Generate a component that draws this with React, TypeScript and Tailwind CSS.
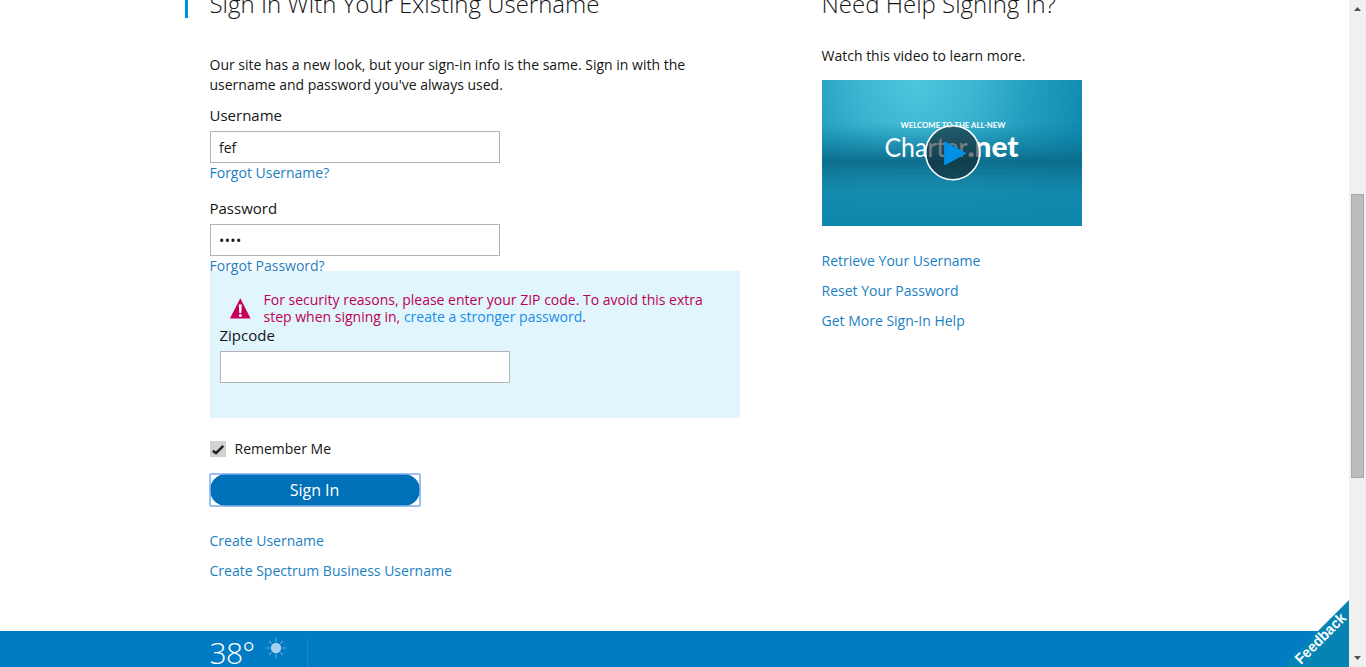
import React from 'react';

const linkClass = 'block text-sm leading-5 text-[#1b7fc2] whitespace-nowrap';

function Link({ children, className = '' }: { children: React.ReactNode; className?: string }) {
  return (
    <a href="#" className={`${linkClass} ${className}`}>
      {children}
    </a>
  );
}

function VideoThumbnail() {
  return (
    <svg width="260" height="146" viewBox="0 0 260 146" className="mt-3.5 block" role="img">
      <defs>
        <radialGradient id="glow" gradientUnits="userSpaceOnUse" cx="95" cy="0" r="180">
          <stop offset="0" stopColor="#4ec6dd" />
          <stop offset="0.3" stopColor="#3db7d2" />
          <stop offset="0.6" stopColor="#26a0c1" />
          <stop offset="1" stopColor="#0d87ad" />
        </radialGradient>
        <linearGradient id="band" x1="0" y1="0" x2="0" y2="1">
          <stop offset="0.3" stopColor="#0b7c9f" stopOpacity="0" />
          <stop offset="0.42" stopColor="#0e7699" stopOpacity="0.45" />
          <stop offset="0.56" stopColor="#0b6a88" stopOpacity="0.93" />
          <stop offset="0.66" stopColor="#10799a" stopOpacity="0.8" />
          <stop offset="0.76" stopColor="#1287aa" stopOpacity="0.8" />
          <stop offset="1" stopColor="#0e87ad" stopOpacity="1" />
        </linearGradient>
      </defs>
      <rect width="260" height="146" fill="url(#glow)" />
      <rect width="260" height="146" fill="url(#band)" />
      <path d="M72 93.7H190" stroke="#0d6785" strokeWidth="1" opacity="0.35" />
      <g fill="#fff" fontFamily="Lato, sans-serif">
        <text x="78.5" y="47.8" fontSize="7.4" fontWeight="700" textLength="105" lengthAdjust="spacingAndGlyphs">
          WELCOME TO THE ALL-NEW
        </text>
        <text x="62.5" y="76.5" fontSize="26.5" textLength="83" lengthAdjust="spacingAndGlyphs">
          Charter
        </text>
        <text x="145.5" y="76.5" fontSize="28" fontWeight="900" textLength="51" lengthAdjust="spacingAndGlyphs">
          .net
        </text>
      </g>
      <circle cx="130.7" cy="72.7" r="27" fill="#14191d" fillOpacity="0.56" stroke="#fff" strokeWidth="1.6" />
      <path d="M123 62.5L143 73.2L123 84.3Z" fill="#0090e5" stroke="#0090e5" strokeWidth="1.8" strokeLinejoin="round" />
    </svg>
  );
}

function WarningIcon() {
  return (
    <svg width="22" height="22" viewBox="0 0 22 22" className="mt-[6px] block shrink-0">
      <path d="M11.3 1.2L21.6 21.6H.9Z" fill="#c6005a" />
      <path d="M9.8 7.5H12.8L12.3 16H10.3Z" fill="#fff" />
      <circle cx="11.3" cy="18.5" r="1.5" fill="#fff" />
    </svg>
  );
}

function SunIcon() {
  return (
    <svg width="20" height="20" viewBox="0 0 20 20" className="mt-[7px] ml-3 block">
      <g stroke="#5ba9dc" strokeWidth="1.1">
        <path d="M10 0V4M10 16V20M0 10H4M16 10H20M3 3L5.6 5.6M14.4 14.4L17 17M17 3L14.4 5.6M5.6 14.4L3 17" />
      </g>
      <circle cx="10" cy="10" r="5.2" fill="#a5d1ee" />
    </svg>
  );
}

const inputClass = 'block h-8 w-[290px] border border-[#b3b3b3] bg-white px-2 text-sm';

function SignInForm() {
  return (
    <main className="ml-[185px] w-[637px]">
      <h1 className="flex h-[18px] border-l-3 border-[#0090e0] pl-[21.5px] text-2xl font-light whitespace-nowrap">
        <span className="-mt-[11px] leading-[30px]">Sign In With Your Existing Username</span>
      </h1>
      <form className="pt-[37px] pl-[25px]" onSubmit={(e) => e.preventDefault()}>
        <p className="-ml-[0.5px] text-sm leading-5 whitespace-nowrap">
          Our site has a new look, but your sign-in info is the same. Sign in with the
          <br />
          username and password you've always used.
        </p>
        <label htmlFor="user" className="mt-2.5 -ml-[0.5px] block text-[15px] leading-5">Username</label>
        <input id="user" defaultValue="fef" className={`mt-1.5 ${inputClass}`} />
        <Link className="-ml-[0.5px]">Forgot Username?</Link>
        <label htmlFor="pass" className="mt-[15px] -ml-[0.5px] block text-[15px] leading-5">Password</label>
        <input id="pass" type="password" defaultValue="abcd" className={`mt-1.5 tracking-[0.4px] ${inputClass}`} />
        <Link className="-ml-[0.5px] h-[15px]">Forgot Password?</Link>
        <section className="h-[147px] w-[530px] bg-[#e1f5fd] px-2.5 pt-5">
          <div className="flex h-[34px] pl-[9px]">
            <WarningIcon />
            <p className="ml-[12.5px] text-sm leading-[17px] whitespace-nowrap text-[#bd0055]">
              For security reasons, please enter your ZIP code. To avoid this extra
              <br />
              step when signing in, <a href="#" className="text-[#1a8fe8]">create a stronger password</a>.
            </p>
          </div>
          <label htmlFor="zip" className="-ml-[0.5px] block text-[15px] leading-5">Zipcode</label>
          <input id="zip" className={`mt-1.5 ${inputClass}`} />
        </section>
        <div className="mt-[21px] flex h-5 items-center gap-[8.5px]">
          <span className="h-4 w-4 bg-[#d2d2d2]">
            <svg width="16" height="16" viewBox="0 0 16 16">
              <path d="M2.8 9.8L6 12.2L13.3 4.8" fill="none" stroke="#222" strokeWidth="2.5" />
            </svg>
          </span>
          <span className="text-sm leading-5">Remember Me</span>
        </div>
        <button className="mt-[15px] block h-8 w-[210px] rounded-full bg-[#0071b8] text-base text-white">
          <span className="-mt-px -ml-px block h-[34px] w-[212px] rounded-[2px] border-2 border-[#7ba9ee]/75 pr-px leading-[31px]">Sign In</span>
        </button>
        <Link className="mt-[25px] -ml-[0.5px]">Create Username</Link>
        <Link className="mt-2.5 -ml-[0.5px]">Create Spectrum Business Username</Link>
      </form>
    </main>
  );
}

function HelpPanel() {
  return (
    <aside className="w-[260px]">
      <h2 className="flex h-[18px] text-2xl font-light whitespace-nowrap">
        <span className="-mt-[11px] -ml-[0.5px] leading-[30px]">Need Help Signing In?</span>
      </h2>
      <p className="mt-7 -ml-[0.5px] text-sm leading-5">Watch this video to learn more.</p>
      <VideoThumbnail />
      <nav className="mt-[25px] -ml-[0.5px] flex flex-col gap-2.5">
        <Link>Retrieve Your Username</Link>
        <Link>Reset Your Password</Link>
        <Link>Get More Sign-In Help</Link>
      </nav>
    </aside>
  );
}

function Scrollbar() {
  return (
    <div className="flex h-full w-[17px] shrink-0 flex-col items-center bg-[#f0f0f0]">
      <svg width="7" height="4" viewBox="0 0 7 4" className="mt-[7px]"><path d="M3.5 0L7 4H0Z" fill="#505050" /></svg>
      <div className="mt-[183px] h-[284px] w-[13px] border border-[#a8a8a8] bg-[#bcbcbc]" />
      <svg width="7" height="4" viewBox="0 0 7 4" className="mt-auto mb-[7px]"><path d="M0 0H7L3.5 4Z" fill="#505050" /></svg>
    </div>
  );
}

export default function App() {
  return (
    <div className="flex h-[667px] w-[1366px] overflow-hidden bg-white font-['Open_Sans',sans-serif] text-[#151515]">
      <div className="relative flex w-[1349px] flex-col overflow-hidden">
        <div className="flex h-[631px] shrink-0">
          <SignInForm />
          <HelpPanel />
        </div>
        <footer className="flex h-9 bg-[#007bc4] pl-[210px] text-white">
          <span className="-ml-[0.5px] -mr-[0.5px] text-[30px] leading-[44px] font-light tracking-[-0.7px]">38°</span>
          <SunIcon />
          <span className="mt-[7px] ml-[21px] w-px bg-[#1989ce]" />
        </footer>
        <a href="#" className="absolute right-0 bottom-0 h-[67px] w-[67px] overflow-visible">
          <svg width="67" height="67" viewBox="0 0 67 67">
            <path d="M67 0V67H0Z" fill="#0583b3" />
            <text x="0" y="0" transform="translate(19 65) rotate(-45)" fill="#fff" fontFamily="Liberation Sans, sans-serif" fontSize="15" fontWeight="700" textLength="65" lengthAdjust="spacingAndGlyphs">Feedback</text>
          </svg>
        </a>
      </div>
      <Scrollbar />
    </div>
  );
}
